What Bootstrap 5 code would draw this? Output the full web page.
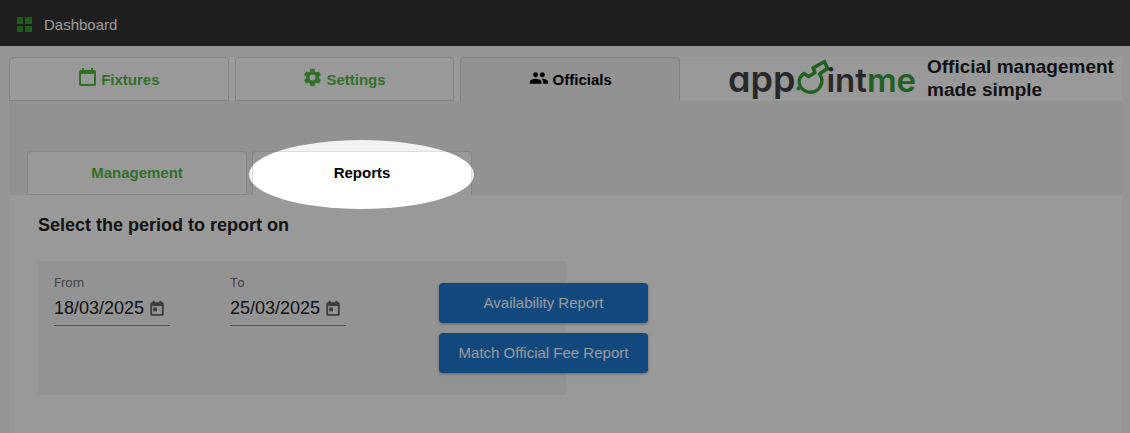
<!DOCTYPE html>
<html lang="en">
<head>
<meta charset="utf-8">
<meta name="viewport" content="width=device-width, initial-scale=1">
<title>Dashboard – appointme</title>
<link href="https://cdn.jsdelivr.net/npm/bootstrap@5.3.0/dist/css/bootstrap.min.css" rel="stylesheet">
<style>
  body { font-family: "Liberation Sans", Arial, sans-serif; background: #f9f9f9; color: #212121; min-height: 100vh; }
  svg { display: block; fill: currentColor; }
  .topbar { height: 46px; background: #333; padding: 3px 16px 0; }
  .topbar a { color: #fff; font-size: 15px; }
  .topbar svg { color: #339a33; }
  .topbar span { padding: 2px 0 0 11px; }
  .page-body { padding: 11px 8px 0 9px; }
  .main-tabs { width: 671px; gap: 6px; }
  .sub-tabs { padding: 50px 18px 0; gap: 5px; }
  .tab-btn { height: 44px; border: 1px solid #dedede; border-radius: 4px 4px 0 0; background: #fff; color: #54bb44; font-size: 15px; font-weight: 700; gap: 4px; padding: 0; }
  .tab-btn:hover { color: #3f9a32; }
  .tab-btn.active { border-bottom: 0; color: #000; }
  .main-tabs .active { background: #f3f3f3; }
  .tab-btn span { padding-top: 2px; }
  .sub-tabs .tab-btn { width: 220px; }
  .section-bg { background: #f3f3f3; }
  .brand-row { height: 44px; }
  .brand-logo { font: 600 33px/44px Inter, sans-serif; font-feature-settings: "cv11"; color: #444; width: 188px; margin-left: 48px; }
  .brand-lead { font-size: 36px; }
  .brand-green { color: #36a036; }
  .brand-logo svg { overflow: visible; }
  .tagline { font-size: 19px; line-height: 23px; font-weight: 700; margin: -2px 0 0 11px; }
  .report-area { min-height: 238px; padding: 18px 29px; }
  .report-area h1 { font-size: 18px; line-height: 24px; font-weight: 700; margin: 0 0 24px; }
  .report-panel { width: 528px; height: 134px; padding: 0 16px; background: #f5f5f5; }
  .date-field { width: 116px; flex: none; margin: 14px 60px 0 0; }
  .date-field label { font: 13px/16px Roboto, sans-serif; color: #757575; display: block; }
  .date-line { border-bottom: 1px solid #8c8c8c; height: 35px; padding-right: 4px; }
  .date-line input { width: 93px; border: 0; padding: 0; background: none; font-size: 18px; line-height: 24px; color: #212121; }
  .date-line button { border: 0; padding: 2px 0 0; background: none; color: #666; }
  .report-actions { width: 209px; flex: none; margin: 22px 0 0 33px; gap: 10px; }
  .report-actions .btn { height: 40px; background: #1d79d3; color: #fff; border: 0; border-radius: 4px; font-size: 15px; padding: 0; box-shadow: 0 1px 3px rgba(0,0,0,.35); }
  .spot-host { overflow: hidden; }
  .spotlight { position: absolute; inset: -11px -2px -14px -3px; border-radius: 50%; box-shadow: 0 0 0 3000px rgba(0,0,0,.4); pointer-events: none; z-index: 5; }
</style>
</head>
<body class="spot-host">
<header class="topbar d-flex align-items-center">
  <a href="#" class="d-flex align-items-center text-decoration-none">
    <svg width="17" height="16" viewBox="0 0 17 16"><path d="M1 0h6v7H1zM9 0h7v7H9zM1 9h6v6H1zM9 9h7v6H9z"/></svg>
    <span>Dashboard</span>
  </a>
</header>
<main class="page-body">
  <div class="brand-row d-flex bg-white">
    <nav class="main-tabs d-flex flex-shrink-0" aria-label="Main">
      <button class="tab-btn flex-fill w-100 d-flex align-items-center justify-content-center">
        <svg class="mb-1" width="19" height="20" viewBox="0 0 19 20"><path d="M4 1h2v2h7V1h2v2h1.200q1.800 0 1.800 1.800v12.400q0 1.800-1.800 1.800H2.800Q1 19 1 17.200V4.800Q1 3 2.800 3H4zM3 7v10h13V7z"/></svg>
        <span>Fixtures</span>
      </button>
      <button class="tab-btn flex-fill w-100 d-flex align-items-center justify-content-center">
        <svg class="mb-1" width="19" height="19" viewBox="1 1 22 22"><path d="M19.430 12.980c.04-.32.07-.64.07-.98s-.03-.66-.07-.98l2.110-1.650c.19-.15.24-.42.12-.64l-2-3.460c-.12-.22-.39-.3-.61-.22l-2.490 1c-.52-.4-1.080-.73-1.690-.98l-.38-2.650C14.460 2.180 14.250 2 14 2h-4c-.25 0-.46.18-.49.42l-.38 2.650c-.61.25-1.170.59-1.690.98l-2.490-1c-.23-.09-.49 0-.61.22l-2 3.460c-.13.22-.07.49.12.64l2.110 1.650c-.04.32-.07.65-.07.98s.03.66.07.98l-2.110 1.650c-.19.15-.24.42-.12.64l2 3.460c.12.22.39.3.61.22l2.490-1c.52.4 1.080.73 1.690.98l.38 2.650c.03.24.24.42.49.42h4c.25 0 .46-.18.49-.42l.38-2.650c.61-.25 1.170-.59 1.690-.98l2.490 1c.23.09.49 0 .61-.22l2-3.460c.12-.22.07-.49-.12-.64zM12 15.500a3.500 3.500 0 1 1 0-7 3.500 3.500 0 0 1 0 7z"/></svg>
        <span>Settings</span>
      </button>
      <button class="tab-btn active flex-fill w-100 d-flex align-items-center justify-content-center">
        <svg class="mb-1" width="20" height="20" viewBox="0 0 24 24"><path d="M16 11c1.660 0 2.990-1.340 2.990-3S17.660 5 16 5s-3 1.340-3 3 1.340 3 3 3zm-8 0c1.660 0 2.990-1.340 2.990-3S9.660 5 8 5 5 6.340 5 8s1.340 3 3 3zm0 2c-2.330 0-7 1.170-7 3.500V19h14v-2.500C15 14.170 10.330 13 8 13zm8 0c-.29 0-.62.02-.97.05 1.160.84 1.970 1.970 1.970 3.450V19h6v-2.500c0-2.330-4.670-3.500-7-3.500z"/></svg>
        <span>Officials</span>
      </button>
    </nav>
    <div class="brand-logo d-flex flex-shrink-0 align-items-baseline" role="img" aria-label="appointme">
      <span class="brand-lead">app</span>
      <svg class="brand-green flex-shrink-0 align-self-start" width="31" height="44" viewBox="-1 0 31 44"><path fill="none" stroke="currentColor" stroke-width="3.400" stroke-linejoin="round" d="M8 16.500C3 20 2 25 4.500 29.500 9 37 20 37 24 30c2.500-4 2.500-9-.5-13l8-5.500-3-7-11.500 6.500 2 4.500-6.500 4z"/><circle cx="2.500" cy="31.500" r="2"/></svg>
      <span>int</span><span class="brand-green">me</span>
    </div>
    <div class="tagline">Official management<br>made simple</div>
  </div>
  <div class="section-bg">
    <nav class="sub-tabs d-flex" aria-label="Officials">
      <button class="tab-btn">Management</button>
      <div class="position-relative">
        <button class="tab-btn active">Reports</button>
        <div class="spotlight"></div>
      </div>
    </nav>
  </div>
  <section class="report-area bg-white">
    <h1>Select the period to report on</h1>
    <form class="report-panel d-flex align-items-start">
      <div class="date-field">
        <label for="from">From</label>
        <div class="date-line d-flex align-items-center justify-content-between">
          <input id="from" type="text" value="18/03/2025">
          <button type="button" aria-label="Choose start date"><svg width="18" height="18" viewBox="0 0 24 24"><path d="M19 3h-1V1h-3v2H9V1H6v2H5c-1.110 0-2 .9-2 2v14c0 1.100.89 2 2 2h14c1.100 0 2-.9 2-2V5c0-1.100-.9-2-2-2zm-.5 15.500h-13V8h13zM7 10h5v5H7z"/></svg></button>
        </div>
      </div>
      <div class="date-field">
        <label for="to">To</label>
        <div class="date-line d-flex align-items-center justify-content-between">
          <input id="to" type="text" value="25/03/2025">
          <button type="button" aria-label="Choose end date"><svg width="18" height="18" viewBox="0 0 24 24"><path d="M19 3h-1V1h-3v2H9V1H6v2H5c-1.110 0-2 .9-2 2v14c0 1.100.89 2 2 2h14c1.100 0 2-.9 2-2V5c0-1.100-.9-2-2-2zm-.5 15.500h-13V8h13zM7 10h5v5H7z"/></svg></button>
        </div>
      </div>
      <div class="report-actions d-flex flex-column">
        <button type="button" class="btn">Availability Report</button>
        <button type="button" class="btn">Match Official Fee Report</button>
      </div>
    </form>
  </section>
</main>
<script src="https://cdn.jsdelivr.net/npm/bootstrap@5.3.0/dist/js/bootstrap.bundle.min.js"></script>
</body>
</html>
